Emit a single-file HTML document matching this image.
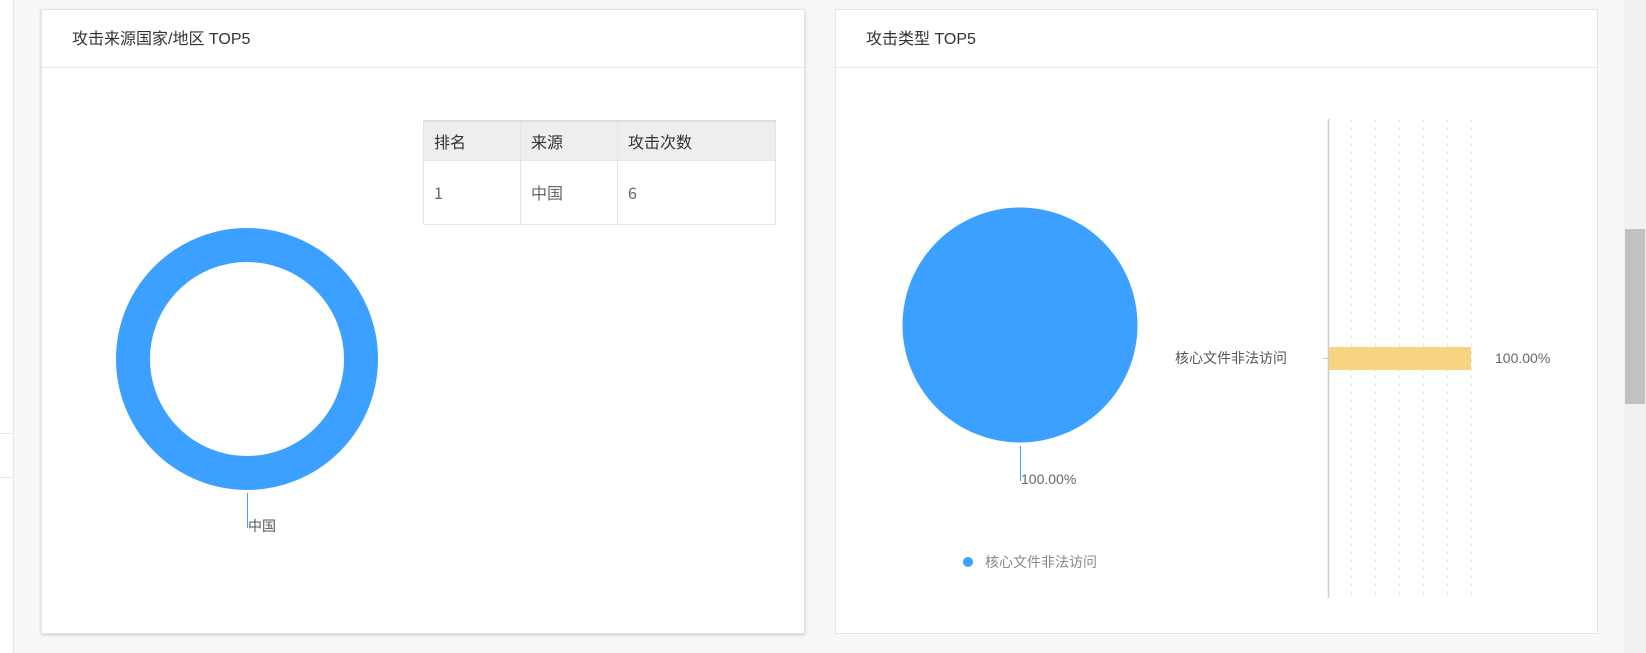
<!DOCTYPE html>
<html><head><meta charset="utf-8"><style>
*{margin:0;padding:0;box-sizing:border-box}
body{width:1646px;height:653px;background:#f8f8f8;position:relative;overflow:hidden;font-family:"Liberation Sans","Noto Sans CJK SC",sans-serif;color:#333}
.strip{position:absolute;left:0;top:0;width:14px;height:653px;background:#fff;border-right:1px solid #e6e6e6}
.card{position:absolute;top:9px;height:625px;background:#fff;border:1px solid #e4e4e4}
.card .hd{height:58px;border-bottom:1px solid #e8e8e8;padding-left:30px;line-height:60px;font-size:16px;color:#333}
.abs{position:absolute}
table{border-collapse:collapse;font-size:16px;font-family:"Noto Sans CJK SC",sans-serif}
td{border:1px solid #e6e6e6;padding-left:10px;color:#666;vertical-align:middle;line-height:22px}
</style></head><body>
<div class="strip"></div>
<div class="abs" style="left:0;top:433px;width:14px;height:1px;background:#e6e6e6"></div>
<div class="abs" style="left:0;top:477px;width:14px;height:1px;background:#e6e6e6"></div>

<div class="card" style="left:41px;width:764px;box-shadow:0 1px 3px rgba(0,0,0,.18)">
<div class="hd">攻击来源国家/地区 TOP5</div>
</div>
<table class="abs" style="left:423px;top:120px;width:353px">
<tr style="background:#eee;height:39px;border-top:2px solid #ddd"><td style="width:97px;color:#333">排名</td><td style="width:97px;color:#333">来源</td><td style="color:#333">攻击次数</td></tr>
<tr style="height:64px"><td>1</td><td>中国</td><td>6</td></tr>
</table>
<svg class="abs" style="left:0;top:0" width="820" height="653">
<circle cx="247" cy="359" r="114" fill="none" stroke="#3ba0ff" stroke-width="34"/>
<line x1="247.5" y1="493" x2="247.5" y2="528" stroke="#3ba0ff" stroke-width="1"/>
<text x="248" y="531" font-size="14" fill="#555" font-family="Liberation Sans,Noto Sans CJK SC,sans-serif">中国</text>
</svg>

<div class="card" style="left:835px;width:763px">
<div class="hd">攻击类型 TOP5</div>
</div>
<svg class="abs" style="left:835px;top:0" width="763" height="653" font-family="Liberation Sans,Noto Sans CJK SC,sans-serif">
<circle cx="185" cy="325" r="117.5" fill="#3ba0ff"/>
<line x1="185.5" y1="446" x2="185.5" y2="481" stroke="#3ba0ff"/>
<text x="186" y="484" font-size="14" fill="#666">100.00%</text>
<circle cx="133" cy="562" r="5" fill="#3ba0ff"/>
<text x="150" y="567" font-size="14" fill="#888">核心文件非法访问</text>
<g stroke="#e6e6e6" stroke-dasharray="4,4">
<line x1="516.5" y1="119" x2="516.5" y2="598"/><line x1="540.5" y1="119" x2="540.5" y2="598"/><line x1="564.5" y1="119" x2="564.5" y2="598"/><line x1="588.5" y1="119" x2="588.5" y2="598"/><line x1="612.5" y1="119" x2="612.5" y2="598"/><line x1="636.5" y1="119" x2="636.5" y2="598"/>
</g>
<line x1="493.5" y1="119" x2="493.5" y2="598" stroke="#ccc" stroke-width="1.5"/>
<line x1="488" y1="358.5" x2="493" y2="358.5" stroke="#ccc"/>
<rect x="494" y="347" width="142" height="23" fill="#f7d480"/>
<text x="452" y="363" font-size="14" fill="#555" text-anchor="end">核心文件非法访问</text>
<text x="660" y="363" font-size="14" fill="#666">100.00%</text>
</svg>

<div class="abs" style="left:1624px;top:0;width:22px;height:653px;background:#f1f1f1"></div>
<div class="abs" style="left:1625px;top:229px;width:20px;height:175px;background:#c1c1c1"></div>
</body></html>
